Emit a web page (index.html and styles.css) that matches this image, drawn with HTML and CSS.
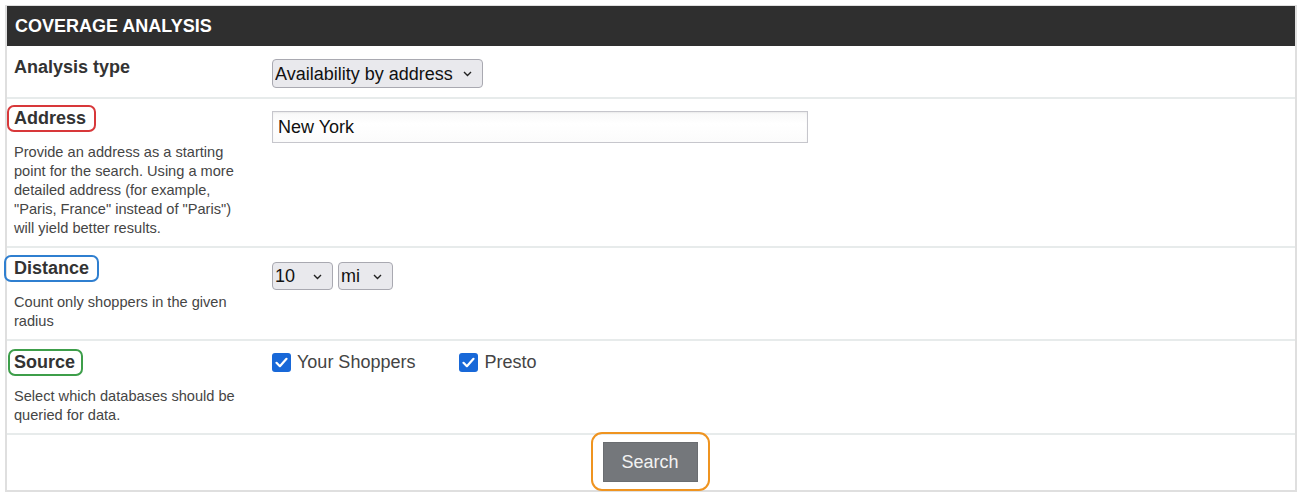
FILE: index.html
```html
<!DOCTYPE html>
<html lang="en">
<head>
<meta charset="utf-8">
<title>Coverage Analysis</title>
<link rel="stylesheet" href="styles.css">
</head>
<body>
<div class="panel">
  <div class="panel-header">COVERAGE ANALYSIS</div>

  <div class="row row-first">
    <div class="label-cell">
      <span class="label">Analysis type</span>
    </div>
    <div class="value-cell">
      <span class="select-wrap">
        <select class="select select-type">
          <option>Availability by address</option>
        </select>
        <svg class="chev" width="9" height="6" viewBox="0 0 9 6"><path d="M1 1l3.5 3.5L8 1" fill="none" stroke="#222" stroke-width="1.4"/></svg>
      </span>
    </div>
  </div>

  <div class="row">
    <div class="label-cell">
      <span class="label mark mark-red">Address</span>
      <p class="desc">Provide an address as a starting point for the search. Using a more detailed address (for example, "Paris, France" instead of "Paris") will yield better results.</p>
    </div>
    <div class="value-cell">
      <input class="text-input" type="text" value="New York">
    </div>
  </div>

  <div class="row">
    <div class="label-cell">
      <span class="label mark mark-blue">Distance</span>
      <p class="desc">Count only shoppers in the given radius</p>
    </div>
    <div class="value-cell value-inline">
      <span class="select-wrap">
        <select class="select select-num">
          <option>10</option>
        </select>
        <svg class="chev" width="9" height="6" viewBox="0 0 9 6"><path d="M1 1l3.5 3.5L8 1" fill="none" stroke="#222" stroke-width="1.4"/></svg>
      </span>
      <span class="select-wrap">
        <select class="select select-unit">
          <option>mi</option>
        </select>
        <svg class="chev" width="9" height="6" viewBox="0 0 9 6"><path d="M1 1l3.5 3.5L8 1" fill="none" stroke="#222" stroke-width="1.4"/></svg>
      </span>
    </div>
  </div>

  <div class="row">
    <div class="label-cell">
      <span class="label mark mark-green">Source</span>
      <p class="desc">Select which databases should be queried for data.</p>
    </div>
    <div class="value-cell value-checks">
      <label class="check">
        <span class="box"><svg width="13" height="11" viewBox="0 0 13 11"><path d="M1.5 5.8l3.4 3.4L11.5 1.8" fill="none" stroke="#fff" stroke-width="2.2" stroke-linecap="round" stroke-linejoin="round"/></svg></span>
        <span>Your Shoppers</span>
      </label>
      <label class="check">
        <span class="box"><svg width="13" height="11" viewBox="0 0 13 11"><path d="M1.5 5.8l3.4 3.4L11.5 1.8" fill="none" stroke="#fff" stroke-width="2.2" stroke-linecap="round" stroke-linejoin="round"/></svg></span>
        <span>Presto</span>
      </label>
    </div>
  </div>

  <div class="actions">
    <span class="mark-orange">
      <button class="btn" type="button">Search</button>
    </span>
  </div>
</div>
</body>
</html>
```

FILE: styles.css
```css
* { box-sizing: border-box; }

body {
  margin: 0;
  background: #ffffff;
  font-family: "Liberation Sans", Arial, sans-serif;
  color: #333333;
}

.panel {
  margin: 5px 0 0 5px;
  width: 1292px;
  border: 2px solid #dfdfdf;
  border-top-width: 1px;
  background: #ffffff;
}

.panel-header {
  height: 40px;
  line-height: 40px;
  background: #2f2f2f;
  color: #ffffff;
  font-weight: bold;
  font-size: 18px;
  padding-left: 8px;
}

.row {
  display: grid;
  grid-template-columns: 265px 1fr;
  border-top: 2px solid #e7ebeb;
}

.row-first {
  border-top: none;
}

.label-cell {
  padding: 6px 8px 8px 0;
}

.value-cell {
  padding-top: 13px;
  padding-bottom: 9px;
}

.label {
  display: inline-block;
  font-size: 18px;
  font-weight: bold;
  line-height: 23px;
  color: #333333;
  border: 2px solid transparent;
  border-radius: 7px;
  padding: 0 8px 0 5px;
}

.row-first .label-cell {
  padding-top: 8px;
}

.mark-red { border-color: #d8383a; }
.mark-blue { border-color: #2f7fd0; margin-left: -3px; padding-left: 8px; margin-top: 1px; }
.mark-green { border-color: #3d9e4a; margin-left: 1px; padding-left: 4px; padding-right: 6px; margin-top: 2px; }

.desc {
  margin: 11px 0 0 7px;
  width: 236px;
  font-size: 14.6px;
  line-height: 19px;
  color: #454545;
}

.select-wrap {
  position: relative;
  display: inline-block;
}

.select {
  appearance: none;
  -webkit-appearance: none;
  font-family: "Liberation Sans", Arial, sans-serif;
  font-size: 18px;
  color: #111111;
  background: #e9e9ed;
  border: 1px solid #a9a9b1;
  border-radius: 4px;
  padding: 0 0 0 2px;
  height: 29px;
  margin: 0;
  display: block;
}

.select-type { width: 211px; }
.select-num { width: 61px; height: 28px; }
.select-unit { width: 55px; height: 28px; }

.chev {
  position: absolute;
  right: 11px;
  top: 12px;
  pointer-events: none;
}

.value-inline {
  display: flex;
  gap: 5px;
  align-items: flex-start;
  padding-top: 14px;
}

.text-input {
  display: block;
  width: 536px;
  height: 32px;
  font-family: "Liberation Sans", Arial, sans-serif;
  font-size: 18px;
  color: #111111;
  padding: 0 5px;
  border: 1px solid #c6c6cc;
  border-radius: 0;
  background: linear-gradient(#f8f8f8, #ffffff 40%, #fbfbfb);
  box-shadow: inset 0 1px 2px rgba(0, 0, 0, 0.06);
  margin-top: -1px;
}

.value-checks {
  display: flex;
  align-items: flex-start;
  gap: 44px;
  padding-top: 11px;
}

.check {
  display: flex;
  align-items: center;
  gap: 6px;
  font-size: 18px;
  color: #444444;
  line-height: 21px;
}

.box {
  display: inline-flex;
  align-items: center;
  justify-content: center;
  width: 19px;
  height: 19px;
  border-radius: 3px;
  background: #1868d8;
}

.actions {
  border-top: 2px solid #e7ebeb;
  display: flex;
  justify-content: center;
  height: 57px;
}

.mark-orange {
  display: inline-block;
  border: 2px solid #ef9420;
  border-radius: 11px;
  padding: 8px 10px 7px 10px;
  margin-top: -3px;
  height: 59px;
  margin-left: -2px;
}

.btn {
  display: block;
  width: 95px;
  height: 40px;
  background: #74777b;
  color: #f2f2f2;
  border: 1px solid #6a6d71;
  font-family: "Liberation Sans", Arial, sans-serif;
  font-size: 18px;
  padding: 0;
  margin: 0;
}
```
